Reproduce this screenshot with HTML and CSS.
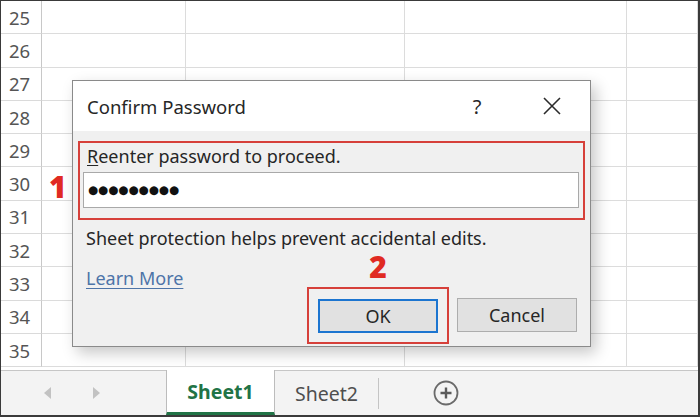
FILE: index.html
```html
<!DOCTYPE html>
<html lang="en">
<head>
<meta charset="utf-8">
<title>Confirm Password</title>
<link rel="stylesheet" href="styles.css">
</head>
<body>
<div class="frame">
  <div class="sheet">
    <div class="grid">
      <div class="rh">25</div><div class="c"></div><div class="c"></div><div class="c"></div><div class="c"></div>
      <div class="rh">26</div><div class="c"></div><div class="c"></div><div class="c"></div><div class="c"></div>
      <div class="rh">27</div><div class="c"></div><div class="c"></div><div class="c"></div><div class="c"></div>
      <div class="rh">28</div><div class="c"></div><div class="c"></div><div class="c"></div><div class="c"></div>
      <div class="rh">29</div><div class="c"></div><div class="c"></div><div class="c"></div><div class="c"></div>
      <div class="rh">30</div><div class="c"></div><div class="c"></div><div class="c"></div><div class="c"></div>
      <div class="rh">31</div><div class="c"></div><div class="c"></div><div class="c"></div><div class="c"></div>
      <div class="rh">32</div><div class="c"></div><div class="c"></div><div class="c"></div><div class="c"></div>
      <div class="rh">33</div><div class="c"></div><div class="c"></div><div class="c"></div><div class="c"></div>
      <div class="rh">34</div><div class="c"></div><div class="c"></div><div class="c"></div><div class="c"></div>
      <div class="rh">35</div><div class="c"></div><div class="c"></div><div class="c"></div><div class="c"></div>
    </div>

    <div class="step step-one">1</div>

    <div class="dialog">
      <div class="titlebar">
        <span class="title">Confirm Password</span>
        <span class="help">?</span>
        <svg class="close" width="18" height="18" viewBox="0 0 18 18"><path d="M1 1 L17 17 M17 1 L1 17" stroke="#2b2b2b" stroke-width="1.6" fill="none"/></svg>
      </div>
      <div class="body">
        <div class="mark-box">
          <div class="label"><u>R</u>eenter password to proceed.</div>
          <div class="input"><span class="dots">●●●●●●●●●</span></div>
        </div>
        <div class="note">Sheet protection helps prevent accidental edits.</div>
        <div class="learn"><a href="#">Learn More</a></div>
        <div class="buttons">
          <div class="mark-ok">
            <div class="step step-two">2</div>
            <div class="btn btn-ok">OK</div>
          </div>
          <div class="btn">Cancel</div>
        </div>
      </div>
    </div>
  </div>

  <div class="tabbar">
    <div class="nav">
      <svg width="8" height="12" viewBox="0 0 8 12"><path d="M7 0 L0 6 L7 12 Z" fill="#c2c2c2"/></svg>
      <svg width="8" height="12" viewBox="0 0 8 12"><path d="M1 0 L8 6 L1 12 Z" fill="#c2c2c2"/></svg>
    </div>
    <div class="tab tab-active">Sheet1</div>
    <div class="tab">Sheet2</div>
    <div class="sep"></div>
    <svg class="add" width="26" height="26" viewBox="0 0 26 26"><circle cx="13" cy="13" r="11.5" fill="none" stroke="#6a6a6a" stroke-width="1.8"/><path d="M13 7.5 V18.5 M7.5 13 H18.5" stroke="#5a5a5a" stroke-width="2.4"/></svg>
  </div>
</div>
</body>
</html>
```

FILE: styles.css
```css
* { box-sizing: border-box; }
html, body { margin: 0; padding: 0; }
body {
  width: 700px;
  height: 417px;
  overflow: hidden;
  background: #ffffff;
  font-family: "Noto Sans", "Open Sans", "DejaVu Sans", sans-serif;
}
.frame {
  width: 700px;
  height: 417px;
  border-top: 1px solid #3a3a3a;
  border-left: 1px solid #3a3a3a;
  border-right: 2px solid #3a3a3a;
  border-bottom: 2px solid #3a3a3a;
  display: flex;
  flex-direction: column;
  overflow: hidden;
}
.sheet {
  position: relative;
  height: 369px;
  flex: none;
  overflow: hidden;
  background: #fff;
}
.grid {
  display: grid;
  grid-template-columns: 41px 144px 219px 222px 1fr;
  grid-auto-rows: 33.3px;
}
.rh {
  border-right: 1px solid #c8c8c8;
  border-bottom: 1px solid #dadada;
  color: #555555;
  font-size: 18.5px;
  display: flex;
  align-items: center;
  padding-left: 8px;
}
.c {
  border-right: 1px solid #dcdcdc;
  border-bottom: 1px solid #dcdcdc;
}
.step {
  color: #e02a22;
  font-family: "Open Sans", "Noto Sans", sans-serif;
  font-weight: 800;
  font-size: 30px;
  line-height: 1;
}
.step-one {
  position: absolute;
  left: 48px;
  top: 171px;
}
.dialog {
  position: absolute;
  left: 71px;
  top: 79px;
  width: 519px;
  height: 267px;
  border: 1px solid #8a8a8a;
  background: #f0f0f0;
  box-shadow: 5px 6px 14px rgba(0, 0, 0, 0.22);
  display: flex;
  flex-direction: column;
}
.titlebar {
  height: 50px;
  background: #ffffff;
  display: flex;
  align-items: center;
  padding-left: 14px;
  color: #262626;
}
.title {
  font-size: 18.5px;
  flex: 1;
}
.help {
  font-size: 20px;
  width: 20px;
  text-align: center;
  margin-right: 56px;
}
.close {
  margin-right: 29px;
}
.body {
  flex: 1;
  display: flex;
  flex-direction: column;
  padding: 10px 5px 0 5px;
  color: #262626;
}
.mark-box {
  border: 2px solid #d6403a;
  height: 79px;
  padding: 1px 4px 0 3px;
}
.label {
  font-size: 18px;
  line-height: 25px;
  padding-left: 4px;
}
.label u { text-decoration-thickness: 1px; text-underline-offset: 2px; }
.input {
  margin-top: 3px;
  height: 36px;
  background: #ffffff;
  border: 1px solid #a9a9a9;
  display: flex;
  align-items: center;
  padding-left: 4px;
}
.dots {
  font-family: "DejaVu Sans", sans-serif;
  font-size: 11.6px;
  letter-spacing: 0;
  color: #111;
}
.note {
  margin-top: 6px;
  padding-left: 8px;
  font-size: 18px;
  line-height: 25px;
}
.learn {
  margin-top: 15px;
  padding-left: 8px;
  font-size: 18px;
  line-height: 25px;
}
.learn a {
  color: #4d74a8;
  text-decoration: underline;
  text-underline-offset: 3px;
  text-decoration-thickness: 1px;
}
.buttons {
  display: flex;
  justify-content: flex-end;
  align-items: flex-start;
  margin-top: -4px;
  padding-right: 8px;
}
.mark-ok {
  position: relative;
  border: 2px solid #d6403a;
  padding: 10px 9px 9px 9px;
  margin-right: 8px;
}
.step-two {
  position: absolute;
  left: 0;
  right: 0;
  top: -37px;
  text-align: center;
}
.btn {
  width: 120px;
  height: 34px;
  background: #e1e1e1;
  border: 1px solid #adadad;
  display: flex;
  align-items: center;
  justify-content: center;
  font-size: 18px;
  color: #262626;
  margin-top: 11px;
}
.mark-ok .btn { margin-top: 0; }
.btn-ok {
  border: 2px solid #1c75d0;
}
.tabbar {
  flex: 1;
  background: #f3f3f3;
  border-top: 1px solid #c6c6c6;
  display: flex;
  align-items: stretch;
  position: relative;
}
.nav {
  width: 165px;
  display: flex;
  align-items: center;
  gap: 40px;
  padding-left: 43px;
}
.tab {
  display: flex;
  align-items: center;
  justify-content: center;
  font-size: 19.5px;
  color: #4e4e4e;
  padding: 0 20px 0 20px;
}
.tab-active {
  width: 109px;
  margin-top: -1px;
  background: #ffffff;
  border-left: 1px solid #bcbcbc;
  border-right: 1px solid #bcbcbc;
  border-bottom: 3px solid #217346;
  color: #217346;
  font-weight: 700;
  padding: 0;
}
.sep {
  width: 1px;
  background: #c4c4c4;
  margin: 7px 0 6px 0;
}
.add {
  align-self: center;
  margin-left: 54px;
}
```
